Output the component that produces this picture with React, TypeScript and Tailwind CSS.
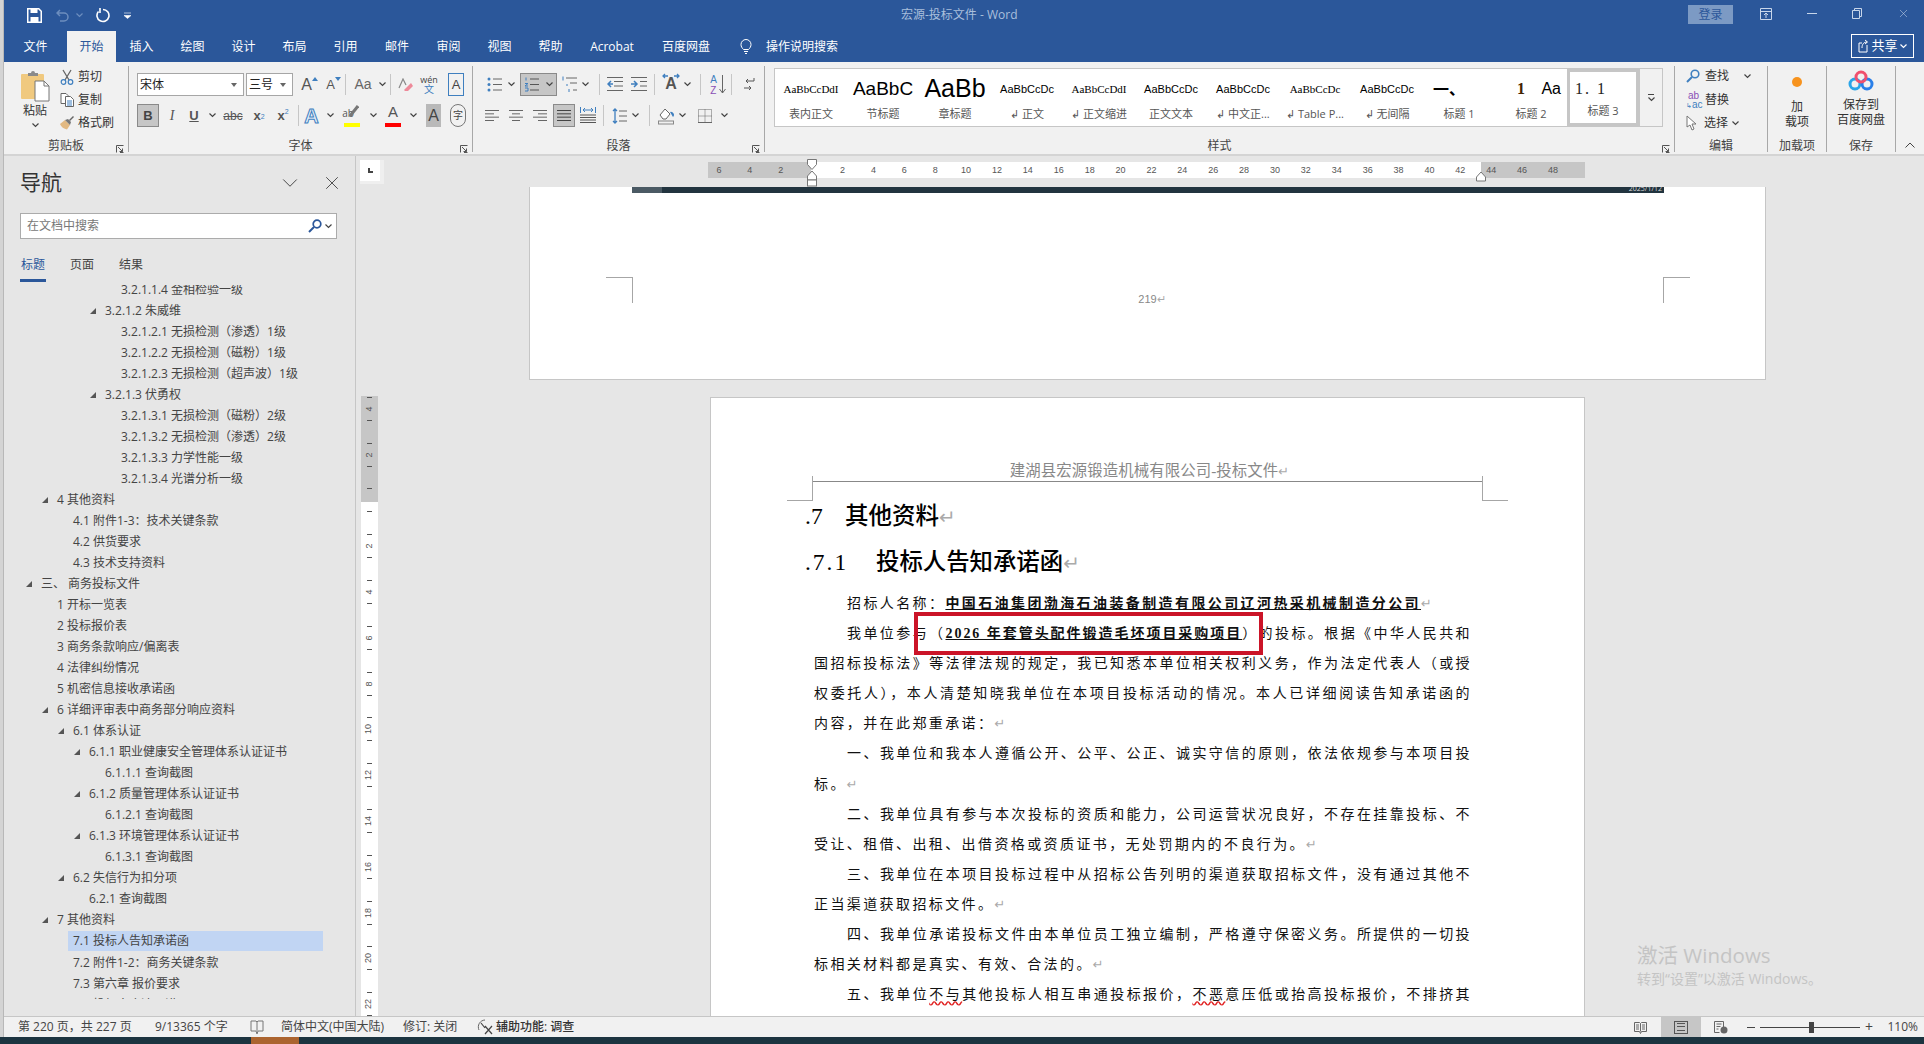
import { ReactNode } from 'react'
import { X, ChevronDown } from 'lucide-react'

const tree: { t: string; l: number; open?: boolean; active?: boolean }[] = [
  { t: '3.2.1.1.4 金相检验一级', l: 5 },
  { t: '3.2.1.2 朱威维', l: 4, open: true },
  { t: '3.2.1.2.1 无损检测（渗透）1级', l: 5 },
  { t: '3.2.1.2.2 无损检测（磁粉）1级', l: 5 },
  { t: '3.2.1.2.3 无损检测（超声波）1级', l: 5 },
  { t: '3.2.1.3 伏勇权', l: 4, open: true },
  { t: '3.2.1.3.1 无损检测（磁粉）2级', l: 5 },
  { t: '3.2.1.3.2 无损检测（渗透）2级', l: 5 },
  { t: '3.2.1.3.3 力学性能一级', l: 5 },
  { t: '3.2.1.3.4 光谱分析一级', l: 5 },
  { t: '4 其他资料', l: 1, open: true },
  { t: '4.1 附件1-3：技术关键条款', l: 2 },
  { t: '4.2 供货要求', l: 2 },
  { t: '4.3 技术支持资料', l: 2 },
  { t: '三、 商务投标文件', l: 0, open: true },
  { t: '1 开标一览表', l: 1 },
  { t: '2 投标报价表', l: 1 },
  { t: '3 商务条款响应/偏离表', l: 1 },
  { t: '4 法律纠纷情况', l: 1 },
  { t: '5 机密信息接收承诺函', l: 1 },
  { t: '6 详细评审表中商务部分响应资料', l: 1, open: true },
  { t: '6.1 体系认证', l: 2, open: true },
  { t: '6.1.1 职业健康安全管理体系认证证书', l: 3, open: true },
  { t: '6.1.1.1 查询截图', l: 4 },
  { t: '6.1.2 质量管理体系认证证书', l: 3, open: true },
  { t: '6.1.2.1 查询截图', l: 4 },
  { t: '6.1.3 环境管理体系认证证书', l: 3, open: true },
  { t: '6.1.3.1 查询截图', l: 4 },
  { t: '6.2 失信行为扣分项', l: 2, open: true },
  { t: '6.2.1 查询截图', l: 3 },
  { t: '7 其他资料', l: 1, open: true },
  { t: '7.1 投标人告知承诺函', l: 2, active: true },
  { t: '7.2 附件1-2：商务关键条款', l: 2 },
  { t: '7.3 第六章 报价要求', l: 2 },
  { t: '7.4 投标人廉洁承诺', l: 2 },
]

const levelPad = ['pl-[37px]', 'pl-[53px]', 'pl-[69px]', 'pl-[85px]', 'pl-[101px]', 'pl-[117px]']

const styleItems = [
  { s: 'AaBbCcDdI', c: "text-[11px] font-['Liberation_Serif'] justify-center", l: '表内正文' },
  { s: 'AaBbC', c: "text-[19px] font-['Liberation_Sans'] justify-center", l: '节标题' },
  { s: 'AaBb', c: "text-[25px] font-['Liberation_Sans'] justify-center", l: '章标题' },
  { s: 'AaBbCcDc', c: "text-[11px] font-['Liberation_Sans'] justify-center", l: '↲ 正文' },
  { s: 'AaBbCcDdI', c: "text-[11px] font-['Liberation_Serif'] justify-center", l: '↲ 正文缩进' },
  { s: 'AaBbCcDc', c: "text-[11px] font-['Liberation_Sans'] justify-center", l: '正文文本' },
  { s: 'AaBbCcDc', c: "text-[11px] font-['Liberation_Sans'] justify-center", l: '↲ 中文正...' },
  { s: 'AaBbCcDc', c: "text-[11px] font-['Liberation_Serif'] justify-center", l: '↲ Table P...' },
  { s: 'AaBbCcDc', c: "text-[11px] font-['Liberation_Sans'] justify-center", l: '↲ 无间隔' },
  { s: '一、', c: 'text-[16px] font-bold pl-[10px]', l: '标题 1' },
]

function Chev({ c = '#444' }: { c?: string }) {
  return (
    <svg width="7" height="5" viewBox="0 0 7 5" className="shrink-0">
      <polyline points="0.5,0.5 3.5,3.5 6.5,0.5" fill="none" stroke={c} strokeWidth="1.2" />
    </svg>
  )
}

function Cell({ className = '', children }: { className?: string; children?: ReactNode }) {
  return <div className={`flex items-center justify-center h-[23px] shrink-0 ${className}`}>{children}</div>
}

function VSep({ className = '' }: { className?: string }) {
  return <div className={`w-px h-[21px] bg-[#c6c6c6] shrink-0 ${className}`} />
}

function Lines({ rows, w = 16, h = 14, c = '#666' }: { rows: [number, number][]; w?: number; h?: number; c?: string }) {
  const step = h / (rows.length - 1 || 1)
  return (
    <svg width={w} height={h + 1} viewBox={`0 0 ${w} ${h + 1}`}>
      {rows.map((r, i) => (
        <line key={i} x1={r[0]} x2={r[1]} y1={i * step + 0.5} y2={i * step + 0.5} stroke={c} strokeWidth="1" />
      ))}
    </svg>
  )
}

function Launcher() {
  return (
    <svg width="8" height="8" viewBox="0 0 8 8" className="absolute right-[4px] bottom-[2px]">
      <path d="M0.5 7.5V0.5H7.5M2 2l4.5 4.5M6.5 3.5v3h-3M7.5 7.5H4" fill="none" stroke="#555" strokeWidth="1" />
    </svg>
  )
}

function Group({ w, label, launcher, children }: { w: string; label: string; launcher?: boolean; children: ReactNode }) {
  return (
    <div className={`relative flex flex-col h-[93px] shrink-0 ${w}`}>
      <div className="h-[75px]">{children}</div>
      <div className="h-[18px] leading-[18px] text-center text-[12px] text-[#444]">{label}</div>
      {launcher && <Launcher />}
    </div>
  )
}

function GroupSep() {
  return <div className="w-px h-[86px] mt-[4px] bg-[#a8a8a8] shrink-0" />
}

function ClipboardGroup() {
  return (
    <div className="flex h-full">
      <div className="w-[56px] pl-[6px] flex flex-col items-center pt-[8px]">
        <svg width="30" height="32" viewBox="0 0 30 32">
          <rect x="1" y="4" width="23" height="25" rx="1" fill="#f0c97f" />
          <path d="M8 5V3h3a2 2 0 0 1 4 0h3v3H8z" fill="#8a8a8a" />
          <path d="M15 11h9l5 5v15H15z" fill="#fff" stroke="#777" />
          <path d="M24 11v5h5" fill="none" stroke="#777" />
        </svg>
        <div className="text-[12px] text-[#333] leading-[18px]">粘贴</div>
        <div className="mt-[3px]"><Chev /></div>
      </div>
      <div className="flex flex-col pt-[3px] text-[12px] text-[#333]">
        <div className="flex items-center h-[23px]">
          <svg width="14" height="16" viewBox="0 0 14 16" className="mr-[4px]">
            <path d="M3 1l6 10M11 1L5 11" stroke="#666" strokeWidth="1.3" fill="none" />
            <circle cx="3.5" cy="13" r="2.3" fill="none" stroke="#3f7fbf" strokeWidth="1.2" />
            <circle cx="10.5" cy="13" r="2.3" fill="none" stroke="#3f7fbf" strokeWidth="1.2" />
          </svg>
          剪切
        </div>
        <div className="flex items-center h-[23px]">
          <svg width="14" height="14" viewBox="0 0 14 14" className="mr-[4px]">
            <path d="M1 .5h5l2 2v8H1z" fill="#fff" stroke="#666" />
            <path d="M5.500 3.500h5l3 3v7h-8z" fill="#fff" stroke="#666" />
            <path d="M7 8h5M7 10h5M7 12h5" stroke="#3f7fbf" />
          </svg>
          复制
        </div>
        <div className="flex items-center h-[23px]">
          <svg width="14" height="14" viewBox="0 0 14 14" className="mr-[4px]">
            <path d="M0 8l5-4 5 5-3 4.500C4 13 1 11 0 8z" fill="#e2b982" />
            <path d="M5 4l3-1 3 3-1 3z" fill="#777" />
            <path d="M9 4l4-4 1 1-4 4z" fill="#666" />
          </svg>
          格式刷
        </div>
      </div>
    </div>
  )
}

function Combo({ w, text }: { w: string; text: string }) {
  return (
    <div className={`flex items-center justify-between h-[23px] bg-white border border-[#a6a6a6] pl-[2px] pr-[6px] text-[12px] text-[#222] shrink-0 ${w}`}>
      <span>{text}</span>
      <svg width="6" height="4" viewBox="0 0 6 4"><path d="M0 0h6L3 4z" fill="#666" /></svg>
    </div>
  )
}

function FontGroup() {
  return (
    <div className="flex flex-col pt-[11px] pl-[8px] gap-[8px]">
      <div className="flex items-center">
        <Combo w="w-[107px]" text="宋体" />
        <Combo w="w-[47px] ml-[2px]" text="三号" />
        <Cell className="w-[25px] ml-[4px] text-[16px] text-[#555] font-['Liberation_Sans']">
          A
          <svg width="6" height="4" viewBox="0 0 6 4" className="-mt-[12px]"><path d="M3 0l3 4H0z" fill="#3f7fbf" /></svg>
        </Cell>
        <Cell className="w-[23px] text-[13px] text-[#555] font-['Liberation_Sans']">
          A
          <svg width="6" height="4" viewBox="0 0 6 4" className="-mt-[12px]"><path d="M0 0h6L3 4z" fill="#3f7fbf" /></svg>
        </Cell>
        <VSep />
        <Cell className="w-[30px] text-[14px] text-[#666] font-['Liberation_Sans'] pl-[4px]">Aa</Cell>
        <Cell className="w-[13px]"><Chev /></Cell>
        <VSep className="ml-[1px]" />
        <Cell className="w-[24px] ml-[2px]">
          <svg width="15" height="14" viewBox="0 0 15 14">
            <path d="M6 12L13 5l2 3-5 5H7z" fill="#ee8a9a" />
            <path d="M1 10L5 1l3 6" fill="none" stroke="#888" strokeWidth="1.200" />
          </svg>
        </Cell>
        <Cell className="w-[24px] flex-col text-[9px] leading-[9px] text-[#444]">
          <span>wén</span>
          <span className="text-[#3f7fbf] text-[10px] leading-[10px]">文</span>
        </Cell>
        <Cell className="w-[16px] h-[16px] ml-[7px] border border-[#3f7fbf] text-[13px] text-[#444] font-['Liberation_Sans']">A</Cell>
      </div>
      <div className="flex items-center">
        <Cell className="w-[22px] bg-[#c6c6c6] border border-[#8a8a8a] text-[13px] font-bold text-[#444] font-['Liberation_Sans']">B</Cell>
        <Cell className="w-[22px] ml-[2px] text-[14px] italic text-[#555] font-['Liberation_Serif']">I</Cell>
        <Cell className="w-[22px] text-[13px] font-bold underline text-[#555] font-['Liberation_Sans']">U</Cell>
        <Cell className="w-[14px]"><Chev /></Cell>
        <Cell className="w-[28px] text-[12px] line-through text-[#555] font-['Liberation_Sans']">abc</Cell>
        <Cell className="w-[24px] text-[13px] font-bold text-[#555] font-['Liberation_Sans']">
          x<sub className="text-[7px] text-[#3f7fbf] font-normal">2</sub>
        </Cell>
        <Cell className="w-[24px] text-[13px] font-bold text-[#555] font-['Liberation_Sans']">
          x<sup className="text-[7px] text-[#3f7fbf] font-normal">2</sup>
        </Cell>
        <VSep className="ml-[3px]" />
        <Cell className="w-[23px] ml-[1px] text-[20px] font-bold text-[#e4eef8] [-webkit-text-stroke:1px_#3f7fbf] font-['Liberation_Sans']">A</Cell>
        <Cell className="w-[15px]"><Chev /></Cell>
        <Cell className="w-[28px] relative">
          <span className="text-[10px] leading-[10px] text-[#555] -mt-[6px] -ml-[8px]">ab</span>
          <svg width="10" height="12" viewBox="0 0 10 12" className="absolute right-[7px] top-[1px]"><path d="M1 11L9 1" stroke="#777" strokeWidth="3" /></svg>
          <div className="absolute left-[6px] right-[6px] bottom-[0px] h-[4px] bg-[#ffff00]" />
        </Cell>
        <Cell className="w-[14px]"><Chev /></Cell>
        <Cell className="w-[26px] relative text-[15px] leading-[15px] text-[#555] font-['Liberation_Sans'] items-start">
          A
          <div className="absolute left-[5px] right-[5px] bottom-[0px] h-[4px] bg-[#ff0000]" />
        </Cell>
        <Cell className="w-[14px]"><Chev /></Cell>
        <Cell className="w-[15px] h-[18px] ml-[6px] bg-[#b9b9b9] text-[16px] text-[#444] font-['Liberation_Sans']">A</Cell>
        <Cell className="w-[16px] h-[16px] ml-[9px] rounded-full border border-[#777] text-[10px] text-[#444]">字</Cell>
      </div>
    </div>
  )
}

function ParagraphGroup() {
  return (
    <div className="flex flex-col pt-[11px] pl-[12px] gap-[8px]">
      <div className="flex items-center">
        <Cell className="w-[18px]">
          <svg width="15" height="15" viewBox="0 0 15 15">
            <circle cx="2" cy="2" r="1.500" fill="#3f7fbf" /><circle cx="2" cy="7.500" r="1.500" fill="#3f7fbf" /><circle cx="2" cy="13" r="1.500" fill="#3f7fbf" />
            <path d="M6 2h9M6 7.500h9M6 13h9" stroke="#666" />
          </svg>
        </Cell>
        <Cell className="w-[17px]"><Chev /></Cell>
        <Cell className="w-[37px] bg-[#c6c6c6] border border-[#8a8a8a] gap-[6px]">
          <svg width="16" height="15" viewBox="0 0 16 15">
            <path d="M2 .5v3M1 6.500h3l-3 2.500h3M1 11h3v3H1" stroke="#3f7fbf" fill="none" />
            <path d="M6 2h9M6 7.500h9M6 13h9" stroke="#555" />
          </svg>
          <Chev />
        </Cell>
        <Cell className="w-[18px] ml-[4px]">
          <svg width="16" height="17" viewBox="0 0 16 17">
            <path d="M1 .5v4M4 9h2M7 13v3" stroke="#3f7fbf" fill="none" />
            <path d="M4 2h11M8 7h7M11 14h4" stroke="#666" />
          </svg>
        </Cell>
        <Cell className="w-[12px]"><Chev /></Cell>
        <VSep className="ml-[8px]" />
        <Cell className="w-[16px] ml-[7px]">
          <svg width="16" height="15" viewBox="0 0 16 15">
            <path d="M0 .5h16M7 4.500h9M7 9h9M0 13.500h16" stroke="#666" />
            <path d="M6 7H2M4 4L1 7l3 3" stroke="#3f7fbf" strokeWidth="1.500" fill="none" />
          </svg>
        </Cell>
        <Cell className="w-[16px] ml-[8px]">
          <svg width="16" height="15" viewBox="0 0 16 15">
            <path d="M0 .5h16M9 4.500h7M9 9h7M0 13.500h16" stroke="#666" />
            <path d="M0 7h5M3 4l3 3-3 3" stroke="#3f7fbf" strokeWidth="1.500" fill="none" />
          </svg>
        </Cell>
        <VSep className="ml-[7px]" />
        <Cell className="w-[18px] ml-[7px] relative text-[16px] font-bold text-[#555] font-['Liberation_Sans'] items-end">
          A
          <svg width="18" height="6" viewBox="0 0 18 6" className="absolute top-0 left-0"><path d="M1 3h5M3 1L1 3l2 2M17 3h-5M15 1l2 2-2 2" stroke="#3f7fbf" fill="none" strokeWidth="1.300" /></svg>
        </Cell>
        <Cell className="w-[14px]"><Chev /></Cell>
        <VSep className="ml-[6px]" />
        <Cell className="w-[18px] ml-[8px] relative">
          <div className="flex flex-col text-[10px] leading-[11px] font-['Liberation_Sans'] mr-[2px]">
            <span className="text-[#3f7fbf]">A</span>
            <span className="text-[#8a4fb5]">Z</span>
          </div>
          <svg width="7" height="20" viewBox="0 0 7 20"><path d="M3.500 0v18M.5 14l3 4 3-4" stroke="#666" fill="none" /></svg>
        </Cell>
        <VSep className="ml-[4px]" />
        <Cell className="w-[12px] ml-[11px]">
          <svg width="12" height="14" viewBox="0 0 12 14">
            <path d="M11 0v3H3M5 1L3 3l2 2M1 10h7M6 8l2 2-2 2" stroke="#555" fill="none" />
          </svg>
        </Cell>
      </div>
      <div className="flex items-center">
        <Cell className="w-[14px]"><Lines rows={[[0, 14], [0, 9], [0, 14], [0, 9]]} h={10} w={14} /></Cell>
        <Cell className="w-[14px] ml-[10px]"><Lines rows={[[0, 14], [3, 11], [0, 14], [3, 11]]} h={10} w={14} /></Cell>
        <Cell className="w-[14px] ml-[10px]"><Lines rows={[[0, 14], [5, 14], [0, 14], [5, 14]]} h={10} w={14} /></Cell>
        <Cell className="w-[22px] ml-[6px] bg-[#c6c6c6] border border-[#8a8a8a]"><Lines rows={[[0, 14], [0, 14], [0, 14], [0, 14]]} h={10} w={14} c="#444" /></Cell>
        <Cell className="w-[16px] ml-[5px]">
          <svg width="16" height="17" viewBox="0 0 16 17">
            <path d="M.5 0v6M15.500 0v6M3 3h10M5 1L3 3l2 2M11 1l2 2-2 2" stroke="#3f7fbf" fill="none" />
            <path d="M0 8h16M0 10.500h16M0 13h16M0 15.500h16" stroke="#555" />
          </svg>
        </Cell>
        <VSep className="ml-[7px]" />
        <Cell className="w-[15px] ml-[8px]">
          <svg width="15" height="16" viewBox="0 0 15 16">
            <path d="M3 1v14M1 3l2-2 2 2M1 13l2 2 2-2" stroke="#3f7fbf" fill="none" strokeWidth="1.300" />
            <path d="M7 3h8M7 8h8M7 13h8" stroke="#666" />
          </svg>
        </Cell>
        <Cell className="w-[16px]"><Chev /></Cell>
        <VSep className="ml-[6px]" />
        <Cell className="w-[16px] ml-[8px]">
          <svg width="16" height="18" viewBox="0 0 16 18">
            <path d="M2 8l5-6 5 5-4 5H5z" fill="#fff" stroke="#666" />
            <path d="M12 5a3 3 0 0 1 3 5z" fill="#3f7fbf" />
            <rect x=".5" y="14" width="15" height="3" fill="#f1f1f1" stroke="#888" />
          </svg>
        </Cell>
        <Cell className="w-[17px]"><Chev /></Cell>
        <Cell className="w-[14px] ml-[7px]">
          <svg width="14" height="14" viewBox="0 0 14 14">
            <path d="M.5.500h13v13H.5zM7 .5v13M.5 7h13" fill="none" stroke="#666" strokeDasharray="1 1" />
            <path d="M0 13.500h14" stroke="#666" />
          </svg>
        </Cell>
        <Cell className="w-[19px] ml-[3px]"><Chev /></Cell>
      </div>
    </div>
  )
}

function StyleGallery() {
  return (
    <div className="flex ml-[9px] mt-[6px] h-[59px] w-[889px] border border-[#c6c6c6] bg-white">
      <div className="flex w-[864px]">
        {styleItems.map((it, i) => (
          <div key={i} className="w-[72px] flex flex-col overflow-hidden shrink-0">
            <div className={`flex items-center h-[37px] px-[6px] pt-[3px] text-black whitespace-nowrap overflow-hidden ${it.c}`}>{it.s}</div>
            <div className="text-center text-[11px] leading-[16px] text-[#555] whitespace-nowrap">{it.l}</div>
          </div>
        ))}
        <div className="w-[72px] flex flex-col shrink-0">
          <div className="flex items-center justify-between h-[37px] pl-[22px] pr-[6px] pt-[3px] text-[16px] text-black font-['Liberation_Serif']">
            <span className="font-bold text-[#442200]">1</span>
            <span className="font-['Liberation_Sans']">Aa</span>
          </div>
          <div className="text-center text-[11px] leading-[16px] text-[#555]">标题 2</div>
        </div>
        <div className="w-[72px] flex flex-col shrink-0 border-[3px] border-[#c6c6c6]">
          <div className="flex items-center h-[31px] pl-[5px] pt-[3px] text-[16px] text-[#222] font-['Liberation_Serif'] tracking-[2px]">1. 1</div>
          <div className="text-center text-[11px] leading-[16px] text-[#555]">标题 3</div>
        </div>
      </div>
      <div className="flex-1 flex items-center justify-center border-l border-[#c6c6c6] bg-[#f1f1f1]">
        <div className="flex flex-col items-center gap-[2px]">
          <div className="w-[6px] h-px bg-[#444]" />
          <Chev />
        </div>
      </div>
    </div>
  )
}

function EditGroup() {
  return (
    <div className="flex flex-col pt-[2px] pl-[11px] text-[12px] text-[#333]">
      <div className="flex items-center h-[24px]">
        <svg width="14" height="14" viewBox="0 0 14 14" className="mr-[5px]">
          <circle cx="9" cy="5" r="3.800" fill="none" stroke="#3f7fbf" strokeWidth="1.600" />
          <path d="M6 8L1 13" stroke="#3f7fbf" strokeWidth="2" />
        </svg>
        查找
        <span className="ml-[15px]"><Chev /></span>
      </div>
      <div className="flex items-center h-[24px]">
        <div className="flex flex-col w-[15px] mr-[4px] text-[10px] leading-[9px] font-['Liberation_Sans']">
          <span className="text-[#8a4fb5] pl-[2px]">ab</span>
          <span className="text-[#3f7fbf]"><span className="text-[7px]">↳</span>ac</span>
        </div>
        替换
      </div>
      <div className="flex items-center h-[22px]">
        <svg width="12" height="16" viewBox="0 0 12 16" className="mr-[6px]">
          <path d="M1 1v11l3-2 2 5 2-1-2-5h4z" fill="#fff" stroke="#777" />
        </svg>
        选择
        <span className="ml-[4px]"><Chev /></span>
      </div>
    </div>
  )
}

function Ribbon() {
  return (
    <div className="flex h-[94px] bg-[#f1f1f1] border-b-[2px] border-[#d4d4d4] relative">
      <Group w="w-[124px]" label="剪贴板" launcher><ClipboardGroup /></Group>
      <GroupSep />
      <Group w="w-[343px]" label="字体" launcher><FontGroup /></Group>
      <GroupSep />
      <Group w="w-[291px]" label="段落" launcher><ParagraphGroup /></Group>
      <GroupSep />
      <Group w="w-[909px]" label="样式" launcher><StyleGallery /></Group>
      <GroupSep />
      <Group w="w-[92px]" label="编辑"><EditGroup /></Group>
      <GroupSep />
      <Group w="w-[58px]" label="加载项">
        <div className="flex flex-col items-center pt-[15px] text-[12px] leading-[15px] text-[#333]">
          <div className="w-[10px] h-[10px] rounded-full bg-[#f7931e] mb-[12px]" />
          <span>加</span>
          <span>载项</span>
        </div>
      </Group>
      <GroupSep />
      <Group w="w-[68px]" label="保存">
        <div className="flex flex-col items-center pt-[8px] text-[12px] leading-[15px] text-[#333]">
          <svg width="26" height="22" viewBox="0 0 26 22" className="mb-[5px]">
            <circle cx="7" cy="14" r="5" fill="none" stroke="#2aa5e8" strokeWidth="3" />
            <circle cx="19" cy="14" r="5" fill="none" stroke="#2a7fe8" strokeWidth="3" />
            <circle cx="13" cy="7" r="5" fill="none" stroke="#f0506e" strokeWidth="3" />
          </svg>
          <span>保存到</span>
          <span>百度网盘</span>
        </div>
      </Group>
      <GroupSep />
      <div className="flex-1 flex items-end justify-center pb-[6px]">
        <svg width="10" height="6" viewBox="0 0 10 6"><polyline points="0.5,5.500 5,1 9.500,5.500" fill="none" stroke="#444" /></svg>
      </div>
    </div>
  )
}

const tabs = [
  ['文件', 'w-[63px]'], ['开始', 'w-[49px]'], ['插入', 'w-[51px]'], ['绘图', 'w-[51px]'], ['设计', 'w-[51px]'],
  ['布局', 'w-[51px]'], ['引用', 'w-[51px]'], ['邮件', 'w-[52px]'], ['审阅', 'w-[51px]'], ['视图', 'w-[51px]'],
  ['帮助', 'w-[51px]'], ['Acrobat', 'w-[72px]'], ['百度网盘', 'w-[76px]'],
]

function TitleBar() {
  return (
    <div className="relative flex items-center h-[31px] bg-[#2b579a] text-white">
      <svg width="15" height="15" viewBox="0 0 15 15" className="ml-[23px]">
        <path d="M.75.75h11l2.500 2.500v11h-13.500z" fill="none" stroke="#fff" strokeWidth="1.500" />
        <rect x="3.500" y="1" width="7" height="4" fill="#fff" />
        <rect x="3.500" y="9" width="8" height="5" fill="#fff" />
      </svg>
      <svg width="14" height="14" viewBox="0 0 14 14" className="ml-[14px] opacity-40">
        <path d="M4 1L1 4l3 3M1 4h7a4 4 0 0 1 0 8H4" fill="none" stroke="#cfe0f5" strokeWidth="1.500" />
      </svg>
      <span className="ml-[6px] opacity-40"><Chev c="#cfe0f5" /></span>
      <svg width="15" height="15" viewBox="0 0 15 15" className="ml-[12px]">
        <path d="M8 1.500a6 6 0 1 1-4.500 2" fill="none" stroke="#fff" strokeWidth="1.600" />
        <path d="M5 0v5" stroke="#fff" strokeWidth="1.600" />
      </svg>
      <svg width="7" height="7" viewBox="0 0 7 7" className="ml-[14px]">
        <path d="M0 1h7M0 3.500h7l-3.500 3z" fill="#fff" stroke="#fff" strokeWidth=".6" />
      </svg>
      <div className="absolute left-[897px] top-0 h-[31px] leading-[30px] text-[12px] text-[#a9bfdc] whitespace-nowrap">宏源-投标文件 - Word</div>
      <div className="ml-auto flex items-center h-full">
        <div className="w-[45px] h-[19px] leading-[19px] mb-[2px] text-center bg-[#7c9ac4] text-[12px] text-[#2b579a]">登录</div>
        <svg width="12" height="12" viewBox="0 0 12 12" className="ml-[27px] mb-[4px]">
          <path d="M.5.500h11v11H.5zM.5 3.500h11M6 5v5M4 7l2-2 2 2" fill="none" stroke="#c8d6ea" />
        </svg>
        <div className="w-[10px] h-px bg-[#c8d6ea] ml-[35px] mb-[4px]" />
        <svg width="10" height="11" viewBox="0 0 10 11" className="ml-[35px] mb-[4px]">
          <path d="M.5 2.500h7v8h-7zM2.500 2.500v-2h7v8h-2" fill="none" stroke="#c8d6ea" />
        </svg>
        <X size={13} strokeWidth={1} color="#c8d6ea" className="ml-[35px] mr-[14px] mb-[4px]" />
      </div>
    </div>
  )
}

function TabBar() {
  return (
    <div className="relative flex items-stretch h-[31px] bg-[#2b579a] text-[12px] text-white">
      {tabs.map(([t, w]) => (
        <div key={t} className={`flex items-center justify-center shrink-0 ${w} ${t === '开始' ? 'bg-[#f1f1f1] text-[#2b579a]' : ''} ${t === 'Acrobat' ? "font-['Open_Sans']" : ''}`}>{t}</div>
      ))}
      <svg width="12" height="17" viewBox="0 0 12 17" className="ml-[16px] self-center">
        <path d="M3.500 11.500C2 10 1 8.500 1 6.500a5 5 0 0 1 10 0c0 2-1 3.500-2.500 5zM4 13.500h4M5 15.500h2" fill="none" stroke="#fff" />
      </svg>
      <div className="ml-[14px] self-center">操作说明搜索</div>
      <div className="ml-auto mr-[10px] mt-[3px] mb-[4px] w-[63px] border border-white flex items-center justify-center gap-[2px] text-[13px]">
        <svg width="11" height="14" viewBox="0 0 11 14"><path d="M9 6v7H1V4h3M4 9c0-4 2-6 5-6M7 1l2.500 2L7 5" fill="none" stroke="#fff" /></svg>
        共享
        <Chev c="#fff" />
      </div>
    </div>
  )
}

function NavPane() {
  return (
    <div className="w-[352px] shrink-0 flex flex-col border-r border-[#c6c6c6] bg-[#e6e6e6] overflow-hidden">
      <div className="flex items-center h-[54px] pl-[16px] shrink-0">
        <span className="text-[21px] text-[#333]">导航</span>
        <ChevronDown size={26} strokeWidth={0.9} color="#444" className="ml-[215px]" />
        <X size={22} strokeWidth={1} color="#444" className="ml-[18px]" />
      </div>
      <div className="flex items-center ml-[16px] mt-[3px] w-[317px] h-[26px] shrink-0 bg-white border border-[#ababab] pl-[6px] pr-[4px] text-[12px] text-[#777]">
        在文档中搜索
        <svg width="14" height="14" viewBox="0 0 14 14" className="ml-auto">
          <circle cx="9" cy="5" r="3.800" fill="none" stroke="#2b579a" strokeWidth="1.700" />
          <path d="M6 8L1 13" stroke="#2b579a" strokeWidth="2" />
        </svg>
        <span className="ml-[3px]"><Chev /></span>
      </div>
      <div className="flex ml-[16px] mt-[12px] h-[31px] shrink-0 text-[12px] text-[#444]">
        <div className="w-[26px] text-center pt-[5px] border-b-[3px] border-[#2b579a] text-[#2b579a]">标题</div>
        <div className="ml-[24px] pt-[5px]">页面</div>
        <div className="ml-[25px] pt-[5px]">结果</div>
      </div>
      <div className="mt-[3px] h-[714px] overflow-hidden shrink-0 text-[12px] text-[#444]">
        <div className="-mt-[6px]">
          {tree.map((n) =>
            n.active ? (
              <div key={n.t} className="h-[21px] pl-[64px] pr-[32px]">
                <div className="h-[20px] mt-px leading-[20px] pl-[5px] bg-[#c1d5f3]">{n.t}</div>
              </div>
            ) : (
              <div key={n.t} className={`relative h-[21px] leading-[21px] whitespace-nowrap ${levelPad[n.l]}`}>
                {n.open && (
                  <svg width="6" height="6" viewBox="0 0 6 6" className="inline-block -ml-[15px] mr-[9px] align-[1px]">
                    <path d="M6 0v6H0z" fill="#555" />
                  </svg>
                )}
                {n.t}
              </div>
            ),
          )}
        </div>
      </div>
    </div>
  )
}

const hLabels = ['6', '4', '2', '', '2', '4', '6', '8', '10', '12', '14', '16', '18', '20', '22', '24', '26', '28', '30', '32', '34', '36', '38', '40', '42', '44', '46', '48']

function HRuler() {
  return (
    <div className="relative flex h-[31px] shrink-0 bg-[#e6e6e6]">
      <div className="ml-[4px] mt-[4px] w-[24px] h-[24px] bg-[#efefef]">
        <div className="w-[20px] h-[21px] bg-white flex items-center justify-center">
          <div className="w-[5px] h-[5px] border-l-[2px] border-b-[2px] border-[#444]" />
        </div>
      </div>
      <div className="ml-[324px] mt-[6px] flex h-[16px]">
        <div className="w-[103px] bg-[#c6c6c6]" />
        <div className="w-[670px] bg-white" />
        <div className="w-[104px] bg-[#c6c6c6]" />
      </div>
      <div className="absolute left-[347.500px] top-[6px] flex h-[16px] text-[9px] leading-[16px] text-[#555] font-['Liberation_Sans']">
        {hLabels.map((l, i) => (
          <div key={i} className="w-[30.900px] text-center">{l}</div>
        ))}
      </div>
      <svg width="12" height="28" viewBox="0 0 12 28" className="absolute left-[450px] top-[3px]">
        <path d="M1.500.5h9v5l-4.500 5-4.500-5z" fill="#fff" stroke="#777" />
        <path d="M6 12l4.500 5v4h-9v-4z" fill="#fff" stroke="#777" />
        <rect x="1.500" y="21" width="9" height="6" fill="#fff" stroke="#777" />
      </svg>
      <svg width="12" height="12" viewBox="0 0 12 12" className="absolute left-[1119px] top-[15px]">
        <path d="M6 1l4.500 5v4h-9V6z" fill="#fff" stroke="#777" />
      </svg>
    </div>
  )
}

const vLabels = ['4', '2', '', '2', '4', '6', '8', '10', '12', '14', '16', '18', '20', '22']

function VRuler() {
  return (
    <div className="ml-[5px] w-[17px] shrink-0 pt-[209px]">
      <div className="h-full overflow-hidden bg-[linear-gradient(#c6c6c6_106px,#ffffff_106px)]">
        <div className="-mt-[10px]">
          {vLabels.map((t, i) => (
            <div key={i} className="h-[45.800px] flex flex-col items-center justify-center">
              <div className="w-[5px] h-px bg-[#555]" />
              <div className="h-[22px] flex items-center justify-center -rotate-90 text-[9px] text-[#555] font-['Liberation_Sans']">{t}</div>
              <div className="w-[5px] h-px bg-[#555]" />
            </div>
          ))}
        </div>
      </div>
    </div>
  )
}

const Para = ({ big = false }: { big?: boolean }) => (
  <span className={`text-[#aaa] tracking-normal font-['DejaVu_Sans'] font-normal ${big ? 'text-[20px]' : 'text-[13px]'}`}>↵</span>
)

const lineBase = 'h-[30.100px] leading-[30.100px] whitespace-nowrap'
const justify = 'whitespace-normal [text-align:justify] [text-align-last:justify] overflow-hidden'

function DocPage() {
  return (
    <div className="relative w-[875px] h-[640px] shrink-0 mt-[17px] bg-white border border-b-0 border-[#c6c6c6] overflow-hidden font-['Liberation_Serif','Noto_Sans_CJK_SC',serif]">
      <div className="mt-[61px] h-[24px] leading-[24px] pl-[4px] text-center text-[15.400px] tracking-[0.1px] text-[#888]">建湖县宏源锻造机械有限公司-投标文件<Para /></div>
      <div className="flex -mt-[7px] ml-[76px] h-[25px]">
        <div className="w-[26px] border-r border-b border-[#a6a6a6]" />
        <div className="w-[669px] h-[6px] border-b border-[#888]" />
        <div className="w-[26px] border-l border-b border-[#a6a6a6]" />
      </div>
      <div className="ml-[94px] flex items-center h-[32px] text-[23.500px] text-black font-medium whitespace-nowrap">
        <span className="w-[40px]">.7</span>其他资料<Para big />
      </div>
      <div className="ml-[94px] mt-[14px] flex items-center h-[32px] text-[23.400px] text-black font-medium whitespace-nowrap">
        <span className="w-[71px] tracking-[2px]">.7.1</span>投标人告知承诺函<Para big />
      </div>
      <div className="ml-[103px] mt-[10px] w-[658px] text-[14px] tracking-[2.400px] text-[#111]">
        <div className={`${lineBase} pl-[33px]`}>
          招标人名称：<b className="underline">中国石油集团渤海石油装备制造有限公司辽河热采机械制造分公司</b><Para />
        </div>
        <div className={`${lineBase} ${justify} pl-[33px]`}>
          我单位参与（<b className="underline tracking-[1.950px]">2026 年套管头配件锻造毛坯项目采购项目</b>）的投标。根据《中华人民共和
        </div>
        <div className={`${lineBase} ${justify}`}>国招标投标法》等法律法规的规定，我已知悉本单位相关权利义务，作为法定代表人（或授</div>
        <div className={`${lineBase} ${justify}`}>权委托人），本人清楚知晓我单位在本项目投标活动的情况。本人已详细阅读告知承诺函的</div>
        <div className={lineBase}>内容，并在此郑重承诺：<Para /></div>
        <div className={`${lineBase} ${justify} pl-[33px]`}>一、我单位和我本人遵循公开、公平、公正、诚实守信的原则，依法依规参与本项目投</div>
        <div className={lineBase}>标。<Para /></div>
        <div className={`${lineBase} ${justify} pl-[33px]`}>二、我单位具有参与本次投标的资质和能力，公司运营状况良好，不存在挂靠投标、不</div>
        <div className={lineBase}>受让、租借、出租、出借资格或资质证书，无处罚期内的不良行为。<Para /></div>
        <div className={`${lineBase} ${justify} pl-[33px]`}>三、我单位在本项目投标过程中从招标公告列明的渠道获取招标文件，没有通过其他不</div>
        <div className={lineBase}>正当渠道获取招标文件。<Para /></div>
        <div className={`${lineBase} ${justify} pl-[33px]`}>四、我单位承诺投标文件由本单位员工独立编制，严格遵守保密义务。所提供的一切投</div>
        <div className={lineBase}>标相关材料都是真实、有效、合法的。<Para /></div>
        <div className={`${lineBase} ${justify} pl-[33px]`}>
          五、我单位<span className="underline decoration-wavy decoration-[#e02020]">不与</span>其他投标人相互串通投标报价，<span className="underline decoration-wavy decoration-[#e02020]">不恶</span>意压低或抬高投标报价，不排挤其
        </div>
      </div>
      <div className="absolute left-[203px] top-[214px] w-[349px] h-[43px] border-[4px] border-[#cb1428]" />
    </div>
  )
}

function Canvas() {
  return (
    <div className="flex-1 relative flex flex-col items-center pr-[7px] bg-[#e6e6e6] overflow-hidden">
      <div className="w-[1237px] h-[193px] shrink-0 bg-white border-x border-b border-[#c6c6c6]">
        <div className="ml-[102px] w-[1032px] h-[6px] bg-[#22343f] relative">
          <div className="w-[30px] h-[6px] bg-[#4b5a64]" />
          <span className="absolute right-[2px] -top-[2px] text-[7px] leading-[8px] text-[#ddd]">2025/1/12</span>
        </div>
        <div className="flex mt-[84px] ml-[76px]">
          <div className="w-[27px] h-[26px] border-t border-r border-[#a6a6a6]" />
          <div className="w-[1030px] pt-[15px] pl-[8px] text-center text-[11px] leading-[14px] text-[#888] font-['Liberation_Sans']">219<span className="text-[#aaa]">↵</span></div>
          <div className="w-[27px] h-[26px] border-t border-l border-[#a6a6a6]" />
        </div>
      </div>
      <DocPage />
      <div className="absolute left-[1259px] top-[755px] text-[#c4c4c4] whitespace-nowrap">
        <div className="text-[20.500px] leading-[26px]">激活 Windows</div>
        <div className="text-[14px] leading-[20px] mt-[1px]">转到“设置”以激活 Windows。</div>
      </div>
    </div>
  )
}

function StatusBar() {
  return (
    <div className="flex items-center h-[21px] bg-[#f1f1f1] border-t border-[#c6c6c6] text-[12px] text-[#444] whitespace-nowrap">
      <span className="ml-[14px] w-[137px]">第 220 页，共 227 页</span>
      <span className="w-[95px]">9/13365 个字</span>
      <svg width="14" height="15" viewBox="0 0 14 15">
        <path d="M1 1h5l1 1 1-1h5v10H8l-1 3-1-3H1zM7 2v9" fill="none" stroke="#777" />
      </svg>
      <span className="ml-[17px] w-[122px]">简体中文(中国大陆)</span>
      <span className="w-[74px]">修订: 关闭</span>
      <svg width="16" height="16" viewBox="0 0 16 16">
        <path d="M8 1a7 7 0 0 0-6 10" fill="none" stroke="#666" />
        <path d="M4 4l4 5M8 7l7 8M15 7l-7 8" stroke="#444" strokeWidth="1.200" fill="none" />
      </svg>
      <span className="ml-[3px] font-medium text-[#333]">辅助功能: 调查</span>
      <div className="ml-auto flex items-center h-full">
        <svg width="13" height="13" viewBox="0 0 13 13"><path d="M.5 1.500h5l1 1 1-1h5v9h-5l-1 2-1-2h-5zM6.500 2.500v8M2 4h3M2 6h3M2 8h3M8 4h3M8 6h3M8 8h3" fill="none" stroke="#666" /></svg>
        <div className="ml-[14px] w-[40px] h-full bg-[#c6c6c6] flex items-center justify-center">
          <div className="w-[14px] h-[13px] border border-[#555] flex flex-col justify-around px-[2px]">
            <div className="h-px bg-[#555]" /><div className="h-px bg-[#555]" /><div className="h-px bg-[#555]" />
          </div>
        </div>
        <svg width="14" height="13" viewBox="0 0 14 13" className="ml-[13px]">
          <path d="M.5.500h9v6M.5.500v11h5M2.500 3h5M2.500 5.500h4M2.500 8h2" fill="none" stroke="#666" />
          <circle cx="10" cy="9" r="3.500" fill="#666" />
        </svg>
        <div className="ml-[19px] w-[8px] h-px bg-[#444]" />
        <div className="ml-[5px] relative w-[100px] h-px bg-[#444]">
          <div className="absolute left-[49px] -top-[5px] w-[5px] h-[11px] bg-[#444]" />
        </div>
        <span className="ml-[5px] text-[14px] leading-[14px] text-[#444]">+</span>
        <span className="ml-[13px] mr-[6px] w-[32px] text-right text-[12px]">110%</span>
      </div>
    </div>
  )
}

export default function App() {
  return (
    <div className="w-[1924px] h-[1044px] flex flex-col overflow-hidden bg-[#e6e6e6] font-['Open_Sans','Noto_Sans_CJK_SC',sans-serif]">
      <div className="flex flex-1 min-h-0">
        <div className="w-[4px] shrink-0 bg-[#d4d4d4] border-r border-[#b8b8b8]" />
        <div className="flex-1 flex flex-col min-w-0">
          <TitleBar />
          <TabBar />
          <Ribbon />
          <div className="flex-1 flex min-h-0">
            <NavPane />
            <div className="flex-1 flex flex-col min-w-0">
              <HRuler />
              <div className="flex-1 flex min-h-0">
                <VRuler />
                <Canvas />
              </div>
            </div>
          </div>
          <StatusBar />
        </div>
      </div>
      <div className="h-[7px] shrink-0 bg-[#1c3440] flex">
        <div className="ml-[251px] w-[48px] bg-[#ab642f]" />
      </div>
    </div>
  )
}
